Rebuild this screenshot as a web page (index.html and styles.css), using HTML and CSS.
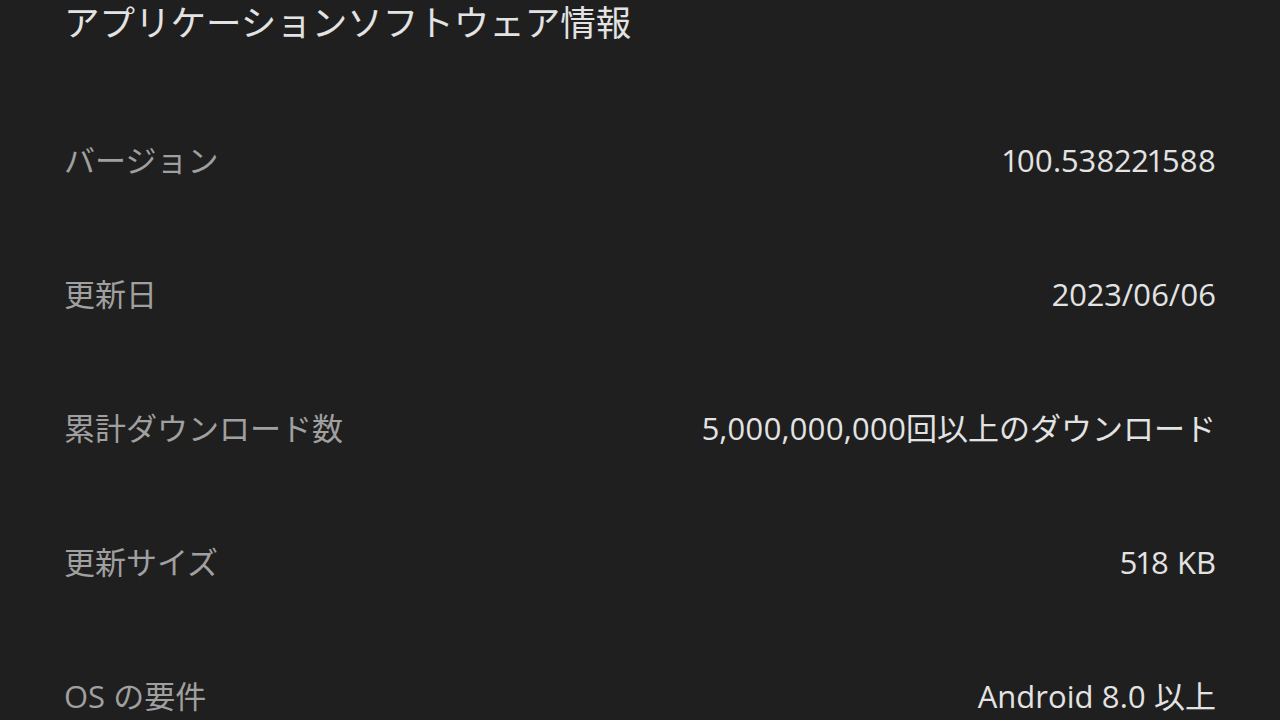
FILE: index.html
```html
<!DOCTYPE html>
<html lang="ja">
<head>
<meta charset="utf-8">
<title>アプリケーションソフトウェア情報</title>
<link rel="stylesheet" href="styles.css">
</head>
<body>
<main class="page">
  <h1 class="title">アプリケーションソフトウェア情報</h1>
  <dl class="info">
    <div class="row"><dt class="label">バージョン</dt><dd class="value">100.538221588</dd></div>
    <div class="row"><dt class="label">更新日</dt><dd class="value">2023/06/06</dd></div>
    <div class="row"><dt class="label">累計ダウンロード数</dt><dd class="value">5,000,000,000回以上のダウンロード</dd></div>
    <div class="row"><dt class="label">更新サイズ</dt><dd class="value">518 KB</dd></div>
    <div class="row"><dt class="label">OS の要件</dt><dd class="value">Android 8.0 以上</dd></div>
  </dl>
</main>
</body>
</html>
```
FILE: styles.css
```css
html, body {
  margin: 0;
  padding: 0;
  background: #1f1f1f;
  height: 100%;
  overflow: hidden;
}
body {
  font-family: "Open Sans", "Noto Sans CJK JP", sans-serif;
  font-feature-settings: "pnum" 1;
  color: #e3e3e3;
}
.page {
  padding: 0 64px;
}
.title {
  margin: 0;
  font-size: 35.5px;
  font-weight: 400;
  line-height: 44px;
  color: #e3e3e3;
}
.info {
  margin: 96px 0 0 0;
  display: flex;
  flex-direction: column;
  gap: 94px;
}
.row {
  display: flex;
  justify-content: space-between;
  align-items: center;
  line-height: 40px;
  font-size: 31px;
}
.label {
  margin: 0;
  color: #a0a0a0;
}
.value {
  margin: 0;
  color: #e3e3e3;
  text-align: right;
}
```
